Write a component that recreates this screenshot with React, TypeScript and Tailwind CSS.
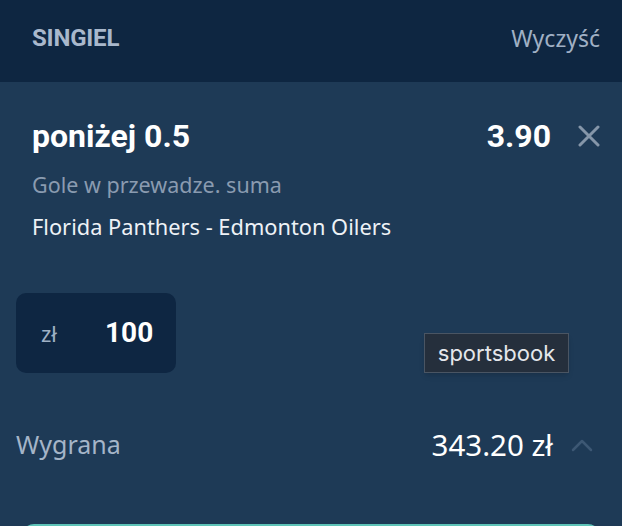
import React from "react";

export default function App() {
  const ub = { fontFamily: '"Noto Sans", "DejaVu Sans", sans-serif' };
  const rb = { fontFamily: 'Roboto, "Liberation Sans", sans-serif' };
  return (
    <div className="w-[622px] h-[526px] overflow-hidden bg-[#1e3a56] relative">
      <div className="h-[82px] bg-[#0e2641] flex items-center justify-between pl-[32px] pr-[22px] pb-[6px]">
        <span style={rb} className="text-[24px] font-bold text-[#a9b8cc] tracking-[-0.2px]">SINGIEL</span>
        <span style={ub} className="text-[23px] text-[#a0b0c4]">Wyczyść</span>
      </div>
      <div className="pl-[32px] pr-[22px] pt-[30px]">
        <div className="flex items-center justify-between h-[48px]">
          <span style={rb} className="text-[32px] font-bold text-white">poniżej 0.5</span>
          <div className="flex items-center">
            <span style={rb} className="text-[32px] font-bold text-white">3.90</span>
            <svg width="22" height="22" viewBox="0 0 22 22" className="ml-[27px]">
              <path d="M2 2L20 20M20 2L2 20" stroke="#8596a9" strokeWidth="3" strokeLinecap="round" />
            </svg>
          </div>
        </div>
        <div style={ub} className="text-[21.5px] text-[#8a9bb0] mt-[12px] leading-[26px]">Gole w przewadze. suma</div>
        <div style={ub} className="text-[21.8px] text-[#eef2f6] mt-[16px] leading-[26px]">Florida Panthers - Edmonton Oilers</div>
      </div>
      <div className="px-[16px] mt-[53px]">
        <div className="w-[160px] h-[80px] rounded-[10px] bg-[#0e2642] flex items-center pl-[25px]">
          <span style={ub} className="text-[22px] text-[#9fb0c4]">zł</span>
          <span style={rb} className="text-[28px] font-bold text-white ml-[48px]">100</span>
        </div>
      </div>
      <div className="flex items-center justify-between pl-[16px] pr-[29px] mt-[54px] h-[36px]">
        <span style={ub} className="text-[25px] text-[#a5b5c8]">Wygrana</span>
        <div className="flex items-center">
          <span style={ub} className="text-[29.5px] text-white">343.20 zł</span>
          <svg width="22" height="14" viewBox="0 0 22 14" className="ml-[18px]">
            <path d="M2 12L11 3L20 12" stroke="#3d5874" strokeWidth="2.5" fill="none" strokeLinecap="round" strokeLinejoin="round" />
          </svg>
        </div>
      </div>
      <div className="mx-[22px] mt-[61px] h-[50px] rounded-[12px] bg-[#5ec4b8]" />
      <div
        style={{ fontFamily: 'Inter, "Noto Sans", sans-serif' }}
        className="absolute left-[424px] top-[333px] w-[145px] h-[40px] bg-[#252f3c] border border-[#4a5563] shadow-md flex items-center justify-center text-[22px] text-[#e5e7eb]"
      >
        sportsbook
      </div>
    </div>
  );
}
